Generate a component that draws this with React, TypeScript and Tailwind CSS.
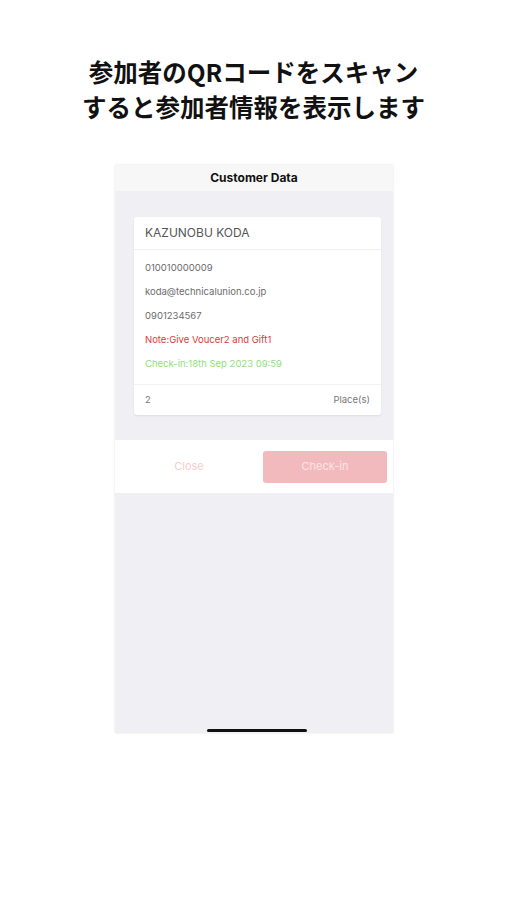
export default function App() {
  const lines = [
    { text: "010010000009", cls: "text-[#6b6b6b]" },
    { text: "koda@technicalunion.co.jp", cls: "text-[#6b6b6b]" },
    { text: "0901234567", cls: "text-[#6b6b6b]" },
    { text: "Note:Give Voucer2 and Gift1", cls: "text-[#e0393c]" },
    { text: "Check-in:18th Sep 2023 09:59", cls: "text-[#8ee07a]" },
  ];

  return (
    <div className="flex h-[900px] w-[507px] flex-col items-center bg-white font-['Liberation_Sans','Noto_Sans_CJK_JP',sans-serif]">
      <div className="mt-[54px] text-center text-[24.5px] font-bold leading-[35px] text-[#111] font-['Noto_Sans_CJK_JP',sans-serif]">
        <p>参加者のQRコードをスキャン</p>
        <p>すると参加者情報を表示します</p>
      </div>

      <div className="ml-[1px] mt-[41px] flex h-[568px] w-[278px] flex-col overflow-hidden bg-[#efeff4] shadow-[0_0_2px_rgba(0,0,0,0.12)]">
        <div className="flex h-[26px] items-center justify-center bg-[#f7f7f8] text-[12px] font-bold text-[#111] font-['Inter',sans-serif]">
          Customer Data
        </div>

        <div className="ml-[19px] mr-[12px] mt-[26px] rounded-[3px] bg-white shadow-[0_1px_2px_rgba(0,0,0,0.08)] font-['Inter',sans-serif]">
          <div className="flex h-[33px] items-center border-b border-[#f0f0f0] px-[11px] text-[12px] text-[#555]">
            KAZUNOBU KODA
          </div>
          <div className="flex flex-col gap-[10px] px-[11px] pt-[11px] pb-[13px] text-[9.5px] leading-[14px]">
            {lines.map((l) => (
              <p key={l.text} className={l.cls}>
                {l.text}
              </p>
            ))}
          </div>
          <div className="flex h-[31px] items-center justify-between border-t border-[#f2f2f2] px-[11px] text-[9.5px] text-[#777]">
            <span>2</span>
            <span>Place(s)</span>
          </div>
        </div>

        <div className="mt-[25px] flex h-[53px] items-center bg-white pr-[6px] font-['Inter',sans-serif]">
          <div className="flex flex-1 justify-center text-[11px] text-[#f6cdd0]">Close</div>
          <div className="flex h-[32px] w-[124px] items-center justify-center rounded-[3px] bg-[#f3babe] text-[11px] text-[#fbe3e5]">
            Check-in
          </div>
        </div>

        <div className="flex-1" />
        <div className="mb-[1px] flex justify-center pl-[6px]">
          <div className="h-[3px] w-[100px] rounded-full bg-[#111]" />
        </div>
      </div>
    </div>
  );
}
